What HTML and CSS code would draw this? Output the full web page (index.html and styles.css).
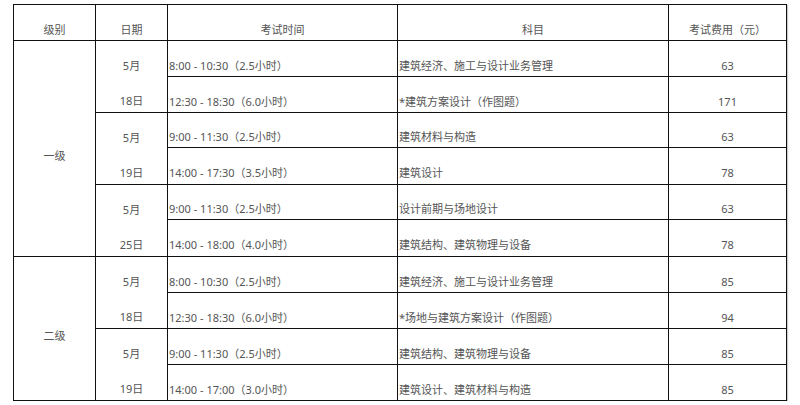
FILE: index.html
```html
<!DOCTYPE html>
<html lang="zh-CN">
<head>
<meta charset="utf-8">
<title>考试时间安排</title>
<link rel="stylesheet" href="styles.css">
</head>
<body>
<table class="exam">
  <colgroup>
    <col class="c-level"><col class="c-date"><col class="c-time"><col class="c-subj"><col class="c-fee">
  </colgroup>
  <thead>
    <tr class="head">
      <th>级别</th><th>日期</th><th>考试时间</th><th>科目</th><th>考试费用（元）</th>
    </tr>
  </thead>
  <tbody>
    <tr class="r35">
      <td rowspan="6" class="ctr">一级</td>
      <td rowspan="2" class="ctr"><div class="day"><span>5月</span><span>18日</span></div></td>
      <td>8:00 - 10:30（2.5小时）</td><td>建筑经济、施工与设计业务管理</td><td class="ctr">63</td>
    </tr>
    <tr class="r35"><td>12:30 - 18:30（6.0小时）</td><td>*建筑方案设计（作图题）</td><td class="ctr">171</td></tr>
    <tr class="r35">
      <td rowspan="2" class="ctr"><div class="day"><span>5月</span><span>19日</span></div></td>
      <td>9:00 - 11:30（2.5小时）</td><td>建筑材料与构造</td><td class="ctr">63</td>
    </tr>
    <tr class="r36"><td>14:00 - 17:30（3.5小时）</td><td>建筑设计</td><td class="ctr">78</td></tr>
    <tr class="r35">
      <td rowspan="2" class="ctr"><div class="day"><span>5月</span><span>25日</span></div></td>
      <td>9:00 - 11:30（2.5小时）</td><td>设计前期与场地设计</td><td class="ctr">63</td>
    </tr>
    <tr class="r36"><td>14:00 - 18:00（4.0小时）</td><td>建筑结构、建筑物理与设备</td><td class="ctr">78</td></tr>
    <tr class="r35">
      <td rowspan="4" class="ctr">二级</td>
      <td rowspan="2" class="ctr"><div class="day"><span>5月</span><span>18日</span></div></td>
      <td>8:00 - 10:30（2.5小时）</td><td>建筑经济、施工与设计业务管理</td><td class="ctr">85</td>
    </tr>
    <tr class="r35"><td>12:30 - 18:30（6.0小时）</td><td>*场地与建筑方案设计（作图题）</td><td class="ctr">94</td></tr>
    <tr class="r35">
      <td rowspan="2" class="ctr"><div class="day"><span>5月</span><span>19日</span></div></td>
      <td>9:00 - 11:30（2.5小时）</td><td>建筑结构、建筑物理与设备</td><td class="ctr">85</td>
    </tr>
    <tr class="r35"><td>14:00 - 17:00（3.0小时）</td><td>建筑设计、建筑材料与构造</td><td class="ctr">85</td></tr>
  </tbody>
</table>
</body>
</html>
```

FILE: styles.css
```css
html, body {
  margin: 0;
  padding: 0;
  background: #ffffff;
}
body {
  padding: 4px 0 0 13px;
  font-family: "Noto Sans", "Noto Sans CJK SC", sans-serif;
  font-size: 11px;
  color: #555555;
}
.exam {
  border-collapse: collapse;
  table-layout: fixed;
  width: 773px;
  box-shadow: 1px 1px 1px rgba(0, 0, 0, 0.2);
}
.c-level { width: 82px; }
.c-date { width: 72px; }
.c-time { width: 230px; }
.c-subj { width: 271px; }
.c-fee { width: 118px; }
.exam th,
.exam td {
  border: 1px solid #111111;
  padding: 14px 1px 0;
  line-height: 16px;
  vertical-align: middle;
  text-align: left;
  font-weight: normal;
  white-space: nowrap;
}
.exam th,
.exam td.ctr {
  text-align: center;
}
.head { height: 36px; }
.r35 { height: 35px; }
.r36 { height: 36px; }
.day {
  display: flex;
  flex-direction: column;
  align-items: center;
  gap: 13px;
  line-height: 22px;
}
```
